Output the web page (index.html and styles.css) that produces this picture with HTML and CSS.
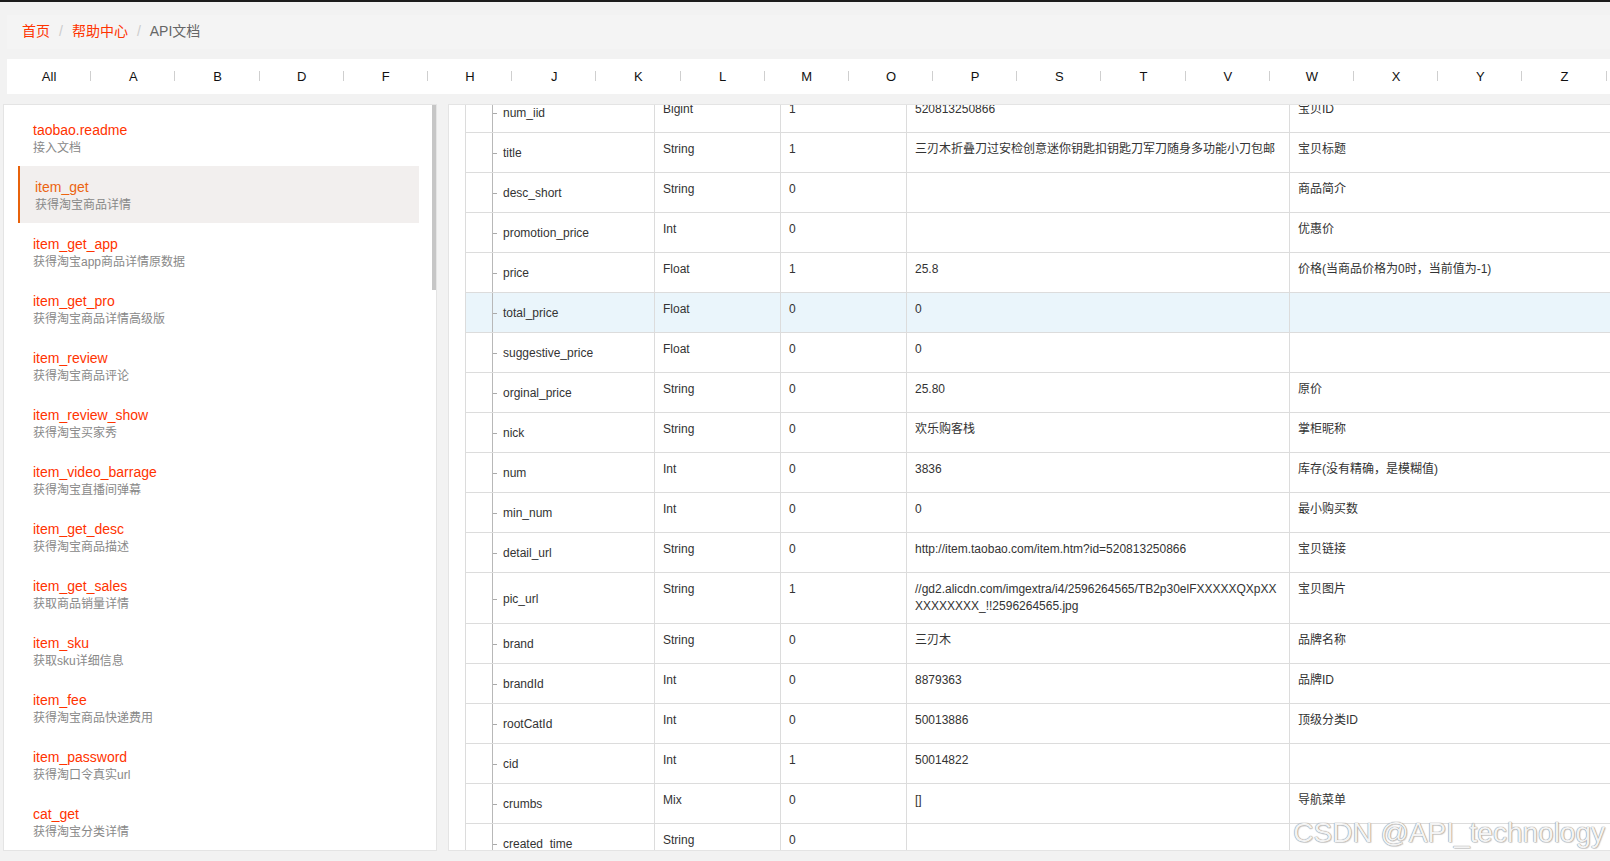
FILE: index.html
```html
<!DOCTYPE html>
<html lang="zh-CN">
<head>
<meta charset="utf-8">
<title>API文档</title>
<link rel="stylesheet" href="styles.css">
</head>
<body>
<div class="topbar"></div>
<div class="crumbs">
  <a class="crumb-link">首页</a><span class="crumb-sep">/</span><a class="crumb-link">帮助中心</a><span class="crumb-sep">/</span><span class="crumb-current">API文档</span>
</div>
<nav class="letters">
  <span class="letter">All</span><span class="letter">A</span><span class="letter">B</span><span class="letter">D</span><span class="letter">F</span><span class="letter">H</span><span class="letter">J</span><span class="letter">K</span><span class="letter">L</span><span class="letter">M</span><span class="letter">O</span><span class="letter">P</span><span class="letter">S</span><span class="letter">T</span><span class="letter">V</span><span class="letter">W</span><span class="letter">X</span><span class="letter">Y</span><span class="letter">Z</span>
</nav>
<div class="main">
  <aside class="sidebar">
    <ul class="api-list">
      <li class="api-item"><div class="api-name">taobao.readme</div><div class="api-desc">接入文档</div></li>
      <li class="api-item active"><div class="api-name">item_get</div><div class="api-desc">获得淘宝商品详情</div></li>
      <li class="api-item"><div class="api-name">item_get_app</div><div class="api-desc">获得淘宝app商品详情原数据</div></li>
      <li class="api-item"><div class="api-name">item_get_pro</div><div class="api-desc">获得淘宝商品详情高级版</div></li>
      <li class="api-item"><div class="api-name">item_review</div><div class="api-desc">获得淘宝商品评论</div></li>
      <li class="api-item"><div class="api-name">item_review_show</div><div class="api-desc">获得淘宝买家秀</div></li>
      <li class="api-item"><div class="api-name">item_video_barrage</div><div class="api-desc">获得淘宝直播间弹幕</div></li>
      <li class="api-item"><div class="api-name">item_get_desc</div><div class="api-desc">获得淘宝商品描述</div></li>
      <li class="api-item"><div class="api-name">item_get_sales</div><div class="api-desc">获取商品销量详情</div></li>
      <li class="api-item"><div class="api-name">item_sku</div><div class="api-desc">获取sku详细信息</div></li>
      <li class="api-item"><div class="api-name">item_fee</div><div class="api-desc">获得淘宝商品快递费用</div></li>
      <li class="api-item"><div class="api-name">item_password</div><div class="api-desc">获得淘口令真实url</div></li>
      <li class="api-item"><div class="api-name">cat_get</div><div class="api-desc">获得淘宝分类详情</div></li>
    </ul>
    <div class="scroll-thumb"></div>
  </aside>
  <section class="panel">
    <table class="params">
      <colgroup>
        <col class="c-indent"><col class="c-name"><col class="c-type"><col class="c-req"><col class="c-value"><col class="c-desc">
      </colgroup>
      <tbody>
        <tr><td class="indent"></td><td class="name"><i class="tick"></i>num_iid</td><td>Bigint</td><td>1</td><td>520813250866</td><td>宝贝ID</td></tr>
        <tr><td class="indent"></td><td class="name"><i class="tick"></i>title</td><td>String</td><td>1</td><td>三刃木折叠刀过安检创意迷你钥匙扣钥匙刀军刀随身多功能小刀包邮</td><td>宝贝标题</td></tr>
        <tr><td class="indent"></td><td class="name"><i class="tick"></i>desc_short</td><td>String</td><td>0</td><td></td><td>商品简介</td></tr>
        <tr><td class="indent"></td><td class="name"><i class="tick"></i>promotion_price</td><td>Int</td><td>0</td><td></td><td>优惠价</td></tr>
        <tr><td class="indent"></td><td class="name"><i class="tick"></i>price</td><td>Float</td><td>1</td><td>25.8</td><td>价格(当商品价格为0时，当前值为-1)</td></tr>
        <tr class="hover"><td class="indent"></td><td class="name"><i class="tick"></i>total_price</td><td>Float</td><td>0</td><td>0</td><td></td></tr>
        <tr><td class="indent"></td><td class="name"><i class="tick"></i>suggestive_price</td><td>Float</td><td>0</td><td>0</td><td></td></tr>
        <tr><td class="indent"></td><td class="name"><i class="tick"></i>orginal_price</td><td>String</td><td>0</td><td>25.80</td><td>原价</td></tr>
        <tr><td class="indent"></td><td class="name"><i class="tick"></i>nick</td><td>String</td><td>0</td><td>欢乐购客栈</td><td>掌柜昵称</td></tr>
        <tr><td class="indent"></td><td class="name"><i class="tick"></i>num</td><td>Int</td><td>0</td><td>3836</td><td>库存(没有精确，是模糊值)</td></tr>
        <tr><td class="indent"></td><td class="name"><i class="tick"></i>min_num</td><td>Int</td><td>0</td><td>0</td><td>最小购买数</td></tr>
        <tr><td class="indent"></td><td class="name"><i class="tick"></i>detail_url</td><td>String</td><td>0</td><td>http://item.taobao.com/item.htm?id=520813250866</td><td>宝贝链接</td></tr>
        <tr class="tall"><td class="indent"></td><td class="name"><i class="tick"></i>pic_url</td><td>String</td><td>1</td><td class="wrap">//gd2.alicdn.com/imgextra/i4/2596264565/TB2p30elFXXXXXQXpXXXXXXXXXX_!!2596264565.jpg</td><td>宝贝图片</td></tr>
        <tr><td class="indent"></td><td class="name"><i class="tick"></i>brand</td><td>String</td><td>0</td><td>三刃木</td><td>品牌名称</td></tr>
        <tr><td class="indent"></td><td class="name"><i class="tick"></i>brandId</td><td>Int</td><td>0</td><td>8879363</td><td>品牌ID</td></tr>
        <tr><td class="indent"></td><td class="name"><i class="tick"></i>rootCatId</td><td>Int</td><td>0</td><td>50013886</td><td>顶级分类ID</td></tr>
        <tr><td class="indent"></td><td class="name"><i class="tick"></i>cid</td><td>Int</td><td>1</td><td>50014822</td><td></td></tr>
        <tr><td class="indent"></td><td class="name"><i class="tick"></i>crumbs</td><td>Mix</td><td>0</td><td>[]</td><td>导航菜单</td></tr>
        <tr><td class="indent"></td><td class="name"><i class="tick"></i>created_time</td><td>String</td><td>0</td><td></td><td></td></tr>
      </tbody>
    </table>
  </section>
</div>
<div class="watermark">CSDN @API_technology</div>
</body>
</html>
```

FILE: styles.css
```css
html, body {
  margin: 0;
  padding: 0;
}
body {
  width: 1610px;
  height: 861px;
  overflow: hidden;
  background: #f2f2f2;
  font-family: "Liberation Sans", Arial, "Noto Sans CJK SC", sans-serif;
  color: #333;
  position: relative;
}
.topbar {
  height: 2px;
  background: #1c1c1c;
}

/* breadcrumb */
.crumbs {
  margin: 13px 0 10px 7px;
  height: 34px;
  line-height: 32px;
  padding-left: 15px;
  background: #f4f4f4;
  font-size: 14px;
}
.crumb-link {
  color: #ff3300;
}
.crumb-sep {
  color: #cccccc;
  margin: 0 9px;
}
.crumb-current {
  color: #666666;
}

/* letter nav */
.letters {
  margin-left: 7px;
  height: 35px;
  background: #ffffff;
  display: flex;
  align-items: center;
  font-size: 13px;
  color: #111;
  width: 1603px;
}
.letter {
  flex: 0 0 84.2px;
  text-align: center;
  position: relative;
  line-height: 36px;
  padding-top: 1px;
}
.letter::after {
  content: "";
  position: absolute;
  right: 0;
  top: 13px;
  width: 1px;
  height: 10px;
  background: #cfcfcf;
}

/* main */
.main {
  display: flex;
  gap: 11px;
  margin: 10px 0 0 3px;
  height: 747px;
  width: 1700px;
}
.sidebar {
  position: relative;
  flex: 0 0 434px;
  box-sizing: border-box;
  background: #ffffff;
  border: 1px solid #e4e4e4;
  overflow: hidden;
}
.api-list {
  list-style: none;
  margin: 0;
  padding: 4px 17px 0 14px;
}
.api-item {
  padding: 12px 0 9px 15px;
}
.api-item.active {
  background: #f2efee;
  border-left: 2px solid #e8620b;
}
.api-name {
  font-size: 14px;
  line-height: 18px;
  color: #ff3300;
}
.api-item.active .api-name {
  color: #ec6410;
}
.api-desc {
  font-size: 12px;
  line-height: 18px;
  color: #888888;
}
.scroll-thumb {
  position: absolute;
  top: 0;
  right: 0;
  width: 4px;
  height: 185px;
  background: #c6c6c6;
}

.panel {
  flex: 0 0 1250px;
  box-sizing: border-box;
  background: #ffffff;
  border: 1px solid #e4e4e4;
  overflow: hidden;
}

/* params table */
.params {
  border-collapse: collapse;
  table-layout: fixed;
  width: 1244px;
  margin: -13px 0 0 16px;
  font-size: 12px;
  color: #333;
}
.c-indent { width: 27px; }
.c-name { width: 162px; }
.c-type { width: 126px; }
.c-req { width: 126px; }
.c-value { width: 383px; }
.c-desc { width: 420px; }
.params tr {
  height: 40px;
}
.params tr.tall {
  height: 50px;
}
.params td {
  border: 1px solid #dcdcdc;
  padding: 8px 8px;
  vertical-align: top;
  line-height: 17px;
  white-space: nowrap;
  overflow: hidden;
}
.params td.indent {
  border-right: 1px solid #b8b8b8;
  padding: 0;
}
.params td.name {
  vertical-align: middle;
  padding: 2px 0 0 0;
}
.params td.wrap {
  white-space: normal;
  word-break: break-all;
}
.tick {
  display: inline-block;
  width: 4px;
  height: 1px;
  background: #aaaaaa;
  vertical-align: middle;
  margin-right: 6px;
}
.params tr.hover td {
  background: #eaf5fb;
}

/* watermark */
.watermark {
  position: absolute;
  top: 819px;
  right: 5px;
  font-family: "Liberation Sans", Arial, sans-serif;
  font-size: 28px;
  line-height: 28px;
  color: #f3f3f3;
  text-shadow: 0 0 1px #8a8a8a, 0 0 1px #8a8a8a, 1px 1px 1px rgba(0,0,0,0.15);
  white-space: nowrap;
}
```
